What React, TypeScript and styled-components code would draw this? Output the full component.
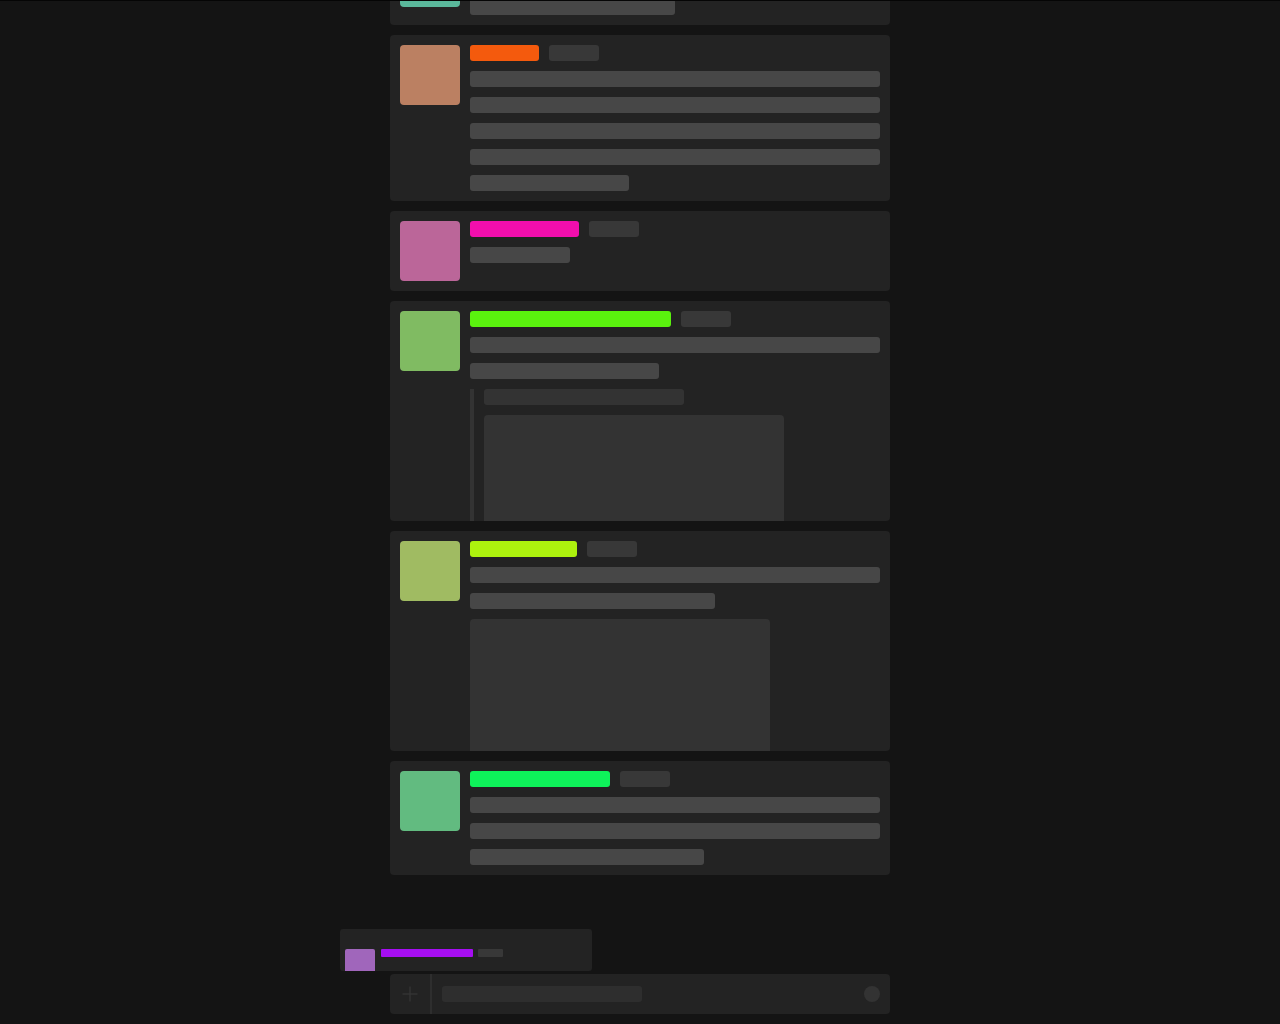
import React from "react";
import styled, { createGlobalStyle } from "styled-components";

const Global = createGlobalStyle`
  html, body { margin: 0; padding: 0; background: #141414; }
  body { font-family: "Inter", "Liberation Sans", sans-serif; overflow: hidden; }
  * { box-sizing: border-box; }
`;

const Page = styled.div`
  height: 100vh;
  border-top: 1px solid #050505;
  display: flex;
  flex-direction: column;
  align-items: center;
  background: #141414;
`;

const Messages = styled.div`
  flex: 1;
  min-height: 0;
  width: 500px;
  overflow: hidden;
  display: flex;
  flex-direction: column;
  justify-content: flex-end;
  gap: 10px;
  padding-bottom: 89px;
`;

const Card = styled.div`
  flex-shrink: 0;
  display: flex;
  gap: 10px;
  padding: 10px;
  max-height: 220px;
  overflow: hidden;
  background: #232323;
  border-radius: 4px;
`;

const Avatar = styled.div<{ $color: string }>`
  flex-shrink: 0;
  width: 60px;
  height: 60px;
  border-radius: 4px;
  background: ${(p) => p.$color};
`;

const Body = styled.div`
  flex: 1;
  min-width: 0;
  display: flex;
  flex-direction: column;
  gap: 10px;
`;

const Header = styled.div`
  display: flex;
  gap: 10px;
`;

const NameBar = styled.div<{ $color: string; $w: number }>`
  width: ${(p) => p.$w}px;
  height: 16px;
  border-radius: 3px;
  background: ${(p) => p.$color};
`;

const Stamp = styled.div`
  width: 50px;
  height: 16px;
  border-radius: 3px;
  background: #383838;
`;

const Line = styled.div<{ $w?: number }>`
  width: ${(p) => (p.$w ? `${p.$w}px` : "100%")};
  height: 16px;
  border-radius: 3px;
  background: #474747;
  flex-shrink: 0;
`;

const Quote = styled.div`
  display: flex;
  flex-direction: column;
  gap: 10px;
  padding-left: 10px;
  border-left: 4px solid #333333;
`;

const QuoteLine = styled.div`
  width: 200px;
  height: 16px;
  border-radius: 3px;
  background: #333333;
  flex-shrink: 0;
`;

const Media = styled.div`
  width: 300px;
  height: 200px;
  flex-shrink: 0;
  border-radius: 4px;
  background: #333333;
`;

const Composer = styled.div`
  position: relative;
  width: 500px;
  padding: 10px 0;
`;

const InputBar = styled.div`
  display: flex;
  align-items: center;
  height: 40px;
  background: #232323;
  border-radius: 4px;
`;

const PlusButton = styled.div`
  width: 42px;
  height: 40px;
  border-right: 2px solid #2e2e2e;
  display: flex;
  align-items: center;
  justify-content: center;
  flex-shrink: 0;
`;

const Placeholder = styled.div`
  width: 200px;
  height: 16px;
  margin-left: 10px;
  border-radius: 3px;
  background: #2e2e2e;
`;

const Dot = styled.div`
  margin-left: auto;
  margin-right: 10px;
  width: 16px;
  height: 16px;
  border-radius: 50%;
  background: #333333;
`;

const Ghost = styled.div`
  position: absolute;
  left: -50px;
  top: -35px;
  width: 252px;
  height: 42px;
  overflow: hidden;
  display: flex;
  gap: 6px;
  padding: 20px 5px 0 5px;
  background: #232323;
  border-radius: 3px;
`;

const GhostAvatar = styled.div`
  width: 30px;
  height: 30px;
  border-radius: 2px;
  background: #a066bb;
  flex-shrink: 0;
`;

const GhostHeader = styled.div`
  display: flex;
  gap: 5px;
`;

const GhostName = styled.div`
  width: 92px;
  height: 8px;
  border-radius: 1px;
  background: #a60ef2;
`;

const GhostStamp = styled.div`
  width: 25px;
  height: 8px;
  border-radius: 1px;
  background: #383838;
`;

type Msg = {
  avatar: string;
  name: string;
  nameW: number;
  lines: (number | undefined)[];
  quote?: boolean;
  media?: boolean;
};

const messages: Msg[] = [
  { avatar: "#5ab89b", name: "#0ef2ad", nameW: 120, lines: [undefined, 205] },
  { avatar: "#bb8062", name: "#f45a0d", nameW: 69, lines: [undefined, undefined, undefined, undefined, 159] },
  { avatar: "#bb6699", name: "#f20ead", nameW: 109, lines: [100] },
  { avatar: "#80bb62", name: "#5af20e", nameW: 201, lines: [undefined, 189], quote: true },
  { avatar: "#a0bb62", name: "#adf20e", nameW: 107, lines: [undefined, 245], media: true },
  { avatar: "#62bb80", name: "#0ef25a", nameW: 140, lines: [undefined, undefined, 234] },
];

const PlusIcon = () => (
  <svg width="16" height="16" viewBox="0 0 16 16" fill="none">
    <path d="M8 0.5V15.5M0.5 8H15.5" stroke="#333333" strokeWidth="1.5" />
  </svg>
);

export default function App() {
  return (
    <>
      <Global />
      <Page>
        <Messages>
          {messages.map((m, i) => (
            <Card key={i}>
              <Avatar $color={m.avatar} />
              <Body>
                <Header>
                  <NameBar $color={m.name} $w={m.nameW} />
                  <Stamp />
                </Header>
                {m.lines.map((w, j) => (
                  <Line key={j} $w={w} />
                ))}
                {m.quote && (
                  <Quote>
                    <QuoteLine />
                    <Media />
                  </Quote>
                )}
                {m.media && <Media />}
              </Body>
            </Card>
          ))}
        </Messages>
        <Composer>
          <Ghost>
            <GhostAvatar />
            <GhostHeader>
              <GhostName />
              <GhostStamp />
            </GhostHeader>
          </Ghost>
          <InputBar>
            <PlusButton>
              <PlusIcon />
            </PlusButton>
            <Placeholder />
            <Dot />
          </InputBar>
        </Composer>
      </Page>
    </>
  );
}
